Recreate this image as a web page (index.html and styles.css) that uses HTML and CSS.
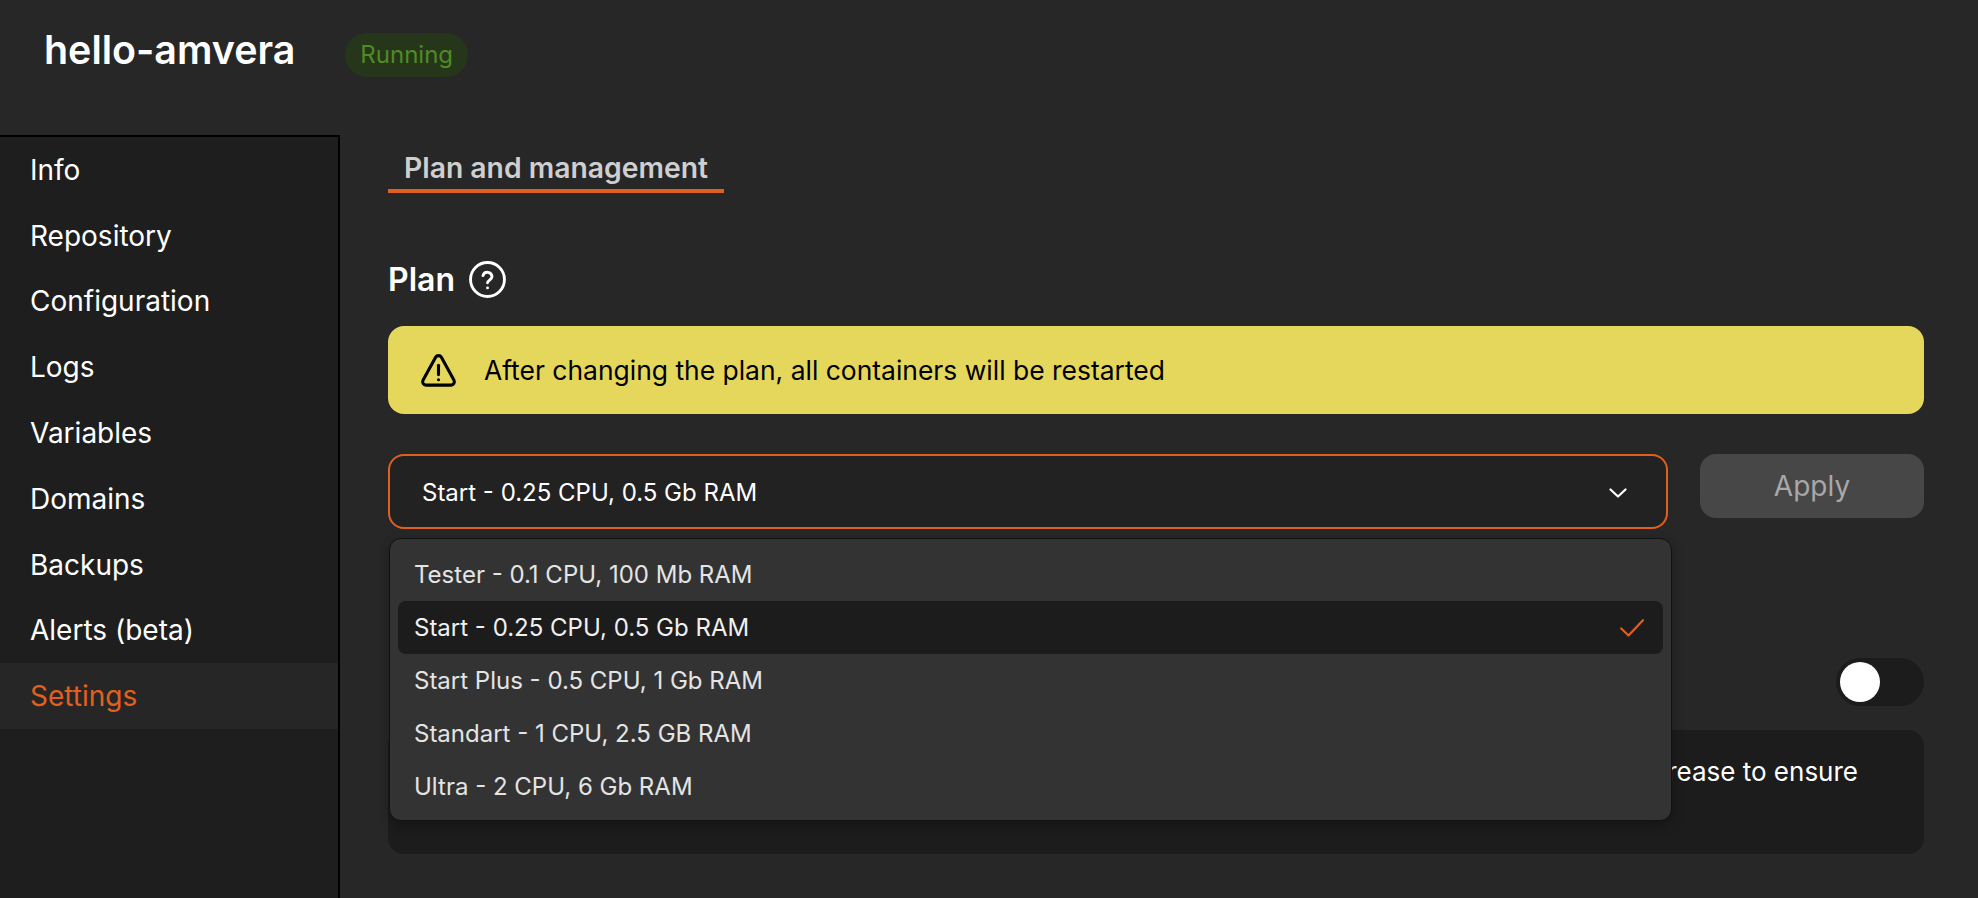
FILE: index.html
```html
<!DOCTYPE html>
<html lang="en">
<head>
<meta charset="utf-8">
<title>hello-amvera</title>
<link rel="stylesheet" href="styles.css">
</head>
<body>
<header class="top">
  <h1 class="title">hello-amvera</h1>
  <span class="pill">Running</span>
</header>
<div class="main">
  <nav class="side">
    <a class="side-item">Info</a>
    <a class="side-item">Repository</a>
    <a class="side-item">Configuration</a>
    <a class="side-item">Logs</a>
    <a class="side-item">Variables</a>
    <a class="side-item">Domains</a>
    <a class="side-item">Backups</a>
    <a class="side-item">Alerts (beta)</a>
    <a class="side-item active">Settings</a>
  </nav>
  <section class="content">
    <div class="tabs"><span class="tab">Plan and management</span></div>
    <div class="heading">
      <h2 class="heading-text">Plan</h2>
      <svg class="help" viewBox="0 0 36 36" fill="none" stroke="#fff" stroke-width="2.8" stroke-linecap="round" stroke-linejoin="round">
        <circle cx="18" cy="18" r="16.5"/>
        <path d="M13.6 14.2a4.5 4.5 0 0 1 8.8 1c0 3-4.4 3.6-4.4 6"/>
        <path d="M18 26.2h.02"/>
      </svg>
    </div>
    <div class="alert">
      <svg class="alert-icon" viewBox="0 0 36 36" fill="none" stroke="#000" stroke-width="3" stroke-linecap="round" stroke-linejoin="round">
        <path d="M15.2 5.2 2.9 27.6A3.2 3.2 0 0 0 5.7 32.2h24.6a3.2 3.2 0 0 0 2.8-4.6L20.8 5.2a3.2 3.2 0 0 0-5.6 0Z"/>
        <path d="M18 13v9"/>
        <path d="M18 27h.02"/>
      </svg>
      <span>After changing the plan, all containers will be restarted</span>
    </div>
    <div class="plan-row">
      <div class="select-wrap">
        <div class="select">
          <span>Start - 0.25 CPU, 0.5 Gb RAM</span>
          <svg class="chevron" viewBox="0 0 18 10" fill="none" stroke="#fff" stroke-width="2.2" stroke-linecap="round" stroke-linejoin="round"><path d="M1.5 1.5 9 8.5l7.5-7"/></svg>
        </div>
        <ul class="menu">
          <li class="menu-item">Tester - 0.1 CPU, 100 Mb RAM</li>
          <li class="menu-item selected">
            <span>Start - 0.25 CPU, 0.5 Gb RAM</span>
            <svg class="check" viewBox="0 0 24 18" fill="none" stroke="#e2601f" stroke-width="2.2" stroke-linecap="round" stroke-linejoin="round"><path d="M1.2 9.5 8.5 16.5 23 1.2"/></svg>
          </li>
          <li class="menu-item">Start Plus - 0.5 CPU, 1 Gb RAM</li>
          <li class="menu-item">Standart - 1 CPU, 2.5 GB RAM</li>
          <li class="menu-item">Ultra - 2 CPU, 6 Gb RAM</li>
        </ul>
      </div>
      <button class="apply">Apply</button>
    </div>
    <div class="toggle-row">
      <span class="toggle"><span class="knob"></span></span>
    </div>
    <div class="note">the load will increase to ensure</div>
  </section>
</div>
</body>
</html>
```
FILE: styles.css
```css
* { box-sizing: border-box; }
html, body { margin: 0; height: 100%; }
body {
  background: #272727;
  color: #fff;
  font-family: Inter, "Liberation Sans", sans-serif;
  overflow: hidden;
}
.top {
  height: 135px;
  display: flex;
  align-items: flex-start;
  padding: 28px 0 0 44px;
  gap: 50px;
}
.title {
  margin: 0;
  font-size: 39.4px;
  font-weight: 600;
  line-height: 44px;
}
.pill {
  height: 44px;
  margin-top: 5px;
  padding: 0 15px;
  border-radius: 22px;
  background: #26361a;
  color: #4f8a25;
  font-size: 24px;
  line-height: 44px;
}
.main { display: flex; height: 763px; }
.side {
  width: 340px;
  flex: none;
  background: #1e1e1e;
  border-top: 2px solid #000;
  border-right: 2px solid #000;
  display: flex;
  flex-direction: column;
}
.side-item {
  height: 65.8px;
  padding-left: 30px;
  display: flex;
  align-items: center;
  font-size: 28px;
}
.side-item.active { background: #262626; color: #e2601f; }
.content {
  flex: 1;
  padding: 0 54px 0 48px;
  min-width: 0;
}
.tabs { padding-top: 13px; }
.tab {
  display: inline-block;
  height: 45px;
  padding: 0 16px;
  border-bottom: 4px solid #e2601f;
  color: #cfcfcf;
  font-size: 28.3px;
  font-weight: 600;
  line-height: 41px;
}
.heading {
  display: flex;
  align-items: center;
  gap: 14px;
  height: 36px;
  margin-top: 68px;
}
.heading-text { margin: 0; font-size: 32px; font-weight: 600; }
.help { width: 37px; height: 37px; }
.alert {
  display: flex;
  align-items: center;
  gap: 27px;
  height: 88px;
  margin-top: 29px;
  padding-left: 32px;
  background: #e5d75b;
  border-radius: 16px;
  color: #000;
  font-size: 26.45px;
}
.alert-icon { width: 37px; height: 37px; }
.plan-row {
  display: flex;
  justify-content: space-between;
  align-items: flex-start;
  margin-top: 40px;
}
.select-wrap { position: relative; width: 1280px; }
.select {
  display: flex;
  align-items: center;
  justify-content: space-between;
  height: 75px;
  padding: 2px 39px 0 32px;
  background: #222;
  border: 2px solid #e2601f;
  border-radius: 16px;
  font-size: 24px;
}
.chevron { width: 18px; height: 10px; }
.menu {
  position: absolute;
  top: 84px;
  left: 1px;
  width: 1283px;
  margin: 0;
  padding: 9px 8px 7px;
  list-style: none;
  background: #333;
  border: 1px solid #111;
  border-radius: 12px;
  box-shadow: 0 4px 12px rgba(0, 0, 0, .3);
  z-index: 2;
}
.menu-item {
  display: flex;
  align-items: center;
  justify-content: space-between;
  height: 53px;
  padding: 0 19px 0 16px;
  color: #e4e4e4;
  font-size: 24px;
  border-radius: 8px;
}
.menu-item.selected { background: #1c1c1c; color: #f0f0f0; }
.check { width: 24px; height: 18px; }
.apply {
  width: 224px;
  height: 64px;
  border: 0;
  border-radius: 16px;
  background: #474747;
  color: #a8a8a8;
  font-family: inherit;
  font-size: 28px;
}
.toggle-row {
  display: flex;
  justify-content: flex-end;
  margin-top: 129px;
}
.toggle {
  display: block;
  width: 88px;
  height: 48px;
  padding: 4px;
  border-radius: 24px;
  background: #1c1c1c;
}
.knob {
  display: block;
  width: 40px;
  height: 40px;
  border-radius: 50%;
  background: #fff;
}
.note {
  height: 124px;
  margin-top: 24px;
  padding: 24px 66px 0 24px;
  background: #1c1c1c;
  border-radius: 16px;
  font-size: 26px;
  line-height: 36px;
  text-align: right;
}
```
